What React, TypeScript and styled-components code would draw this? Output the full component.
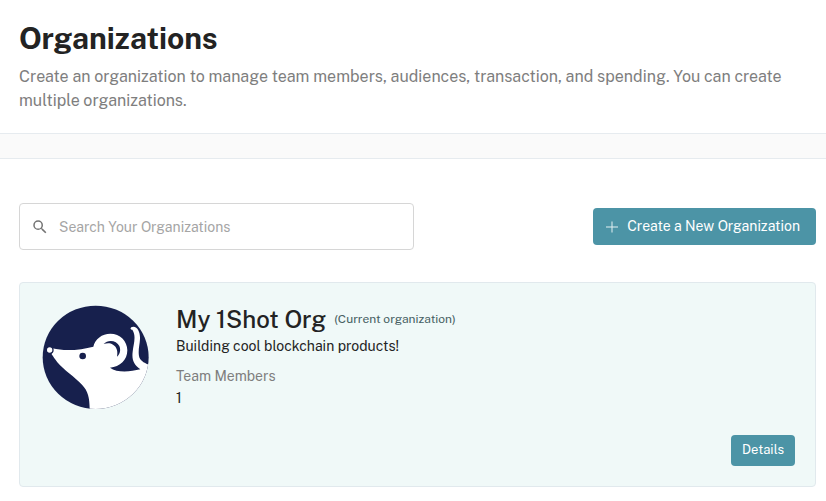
import React from "react";
import styled, { createGlobalStyle } from "styled-components";

const GlobalStyle = createGlobalStyle`
  *, *::before, *::after { box-sizing: border-box; }
  body {
    margin: 0;
    background: #fff;
    color: #212529;
    font-family: "Public Sans", Inter, "Liberation Sans", sans-serif;
    font-size: 14px;
  }
  h1, h2, p, dl, dd { margin: 0; }
`;

const Header = styled.header`
  padding: 18px 10px 20px 19px;
`;

const Title = styled.h1`
  font-size: 30px;
  line-height: 40px;
  font-weight: 700;
  color: #232323;
`;

const Lead = styled.p`
  margin-top: 7px;
  font-size: 16px;
  line-height: 24px;
  color: #7e7e7e;
`;

const Divider = styled.div`
  height: 26px;
  background: #fafafa;
  border: solid #e6ebef;
  border-width: 1px 0;
`;

const Main = styled.main`
  padding: 44px 10px 14px 19px;
`;

const Toolbar = styled.div`
  display: flex;
  align-items: center;
  justify-content: space-between;
  gap: 24px;
`;

const SearchBox = styled.label`
  display: flex;
  align-items: center;
  gap: 10px;
  flex: 0 1 395px;
  height: 47px;
  padding: 0 11px;
  border: 1px solid #d6d6d6;
  border-radius: 4px;
`;

const SearchInput = styled.input`
  flex: 1;
  min-width: 0;
  padding: 0;
  border: 0;
  outline: 0;
  background: transparent;
  font: inherit;
  line-height: 20px;
  color: #232323;
  &::placeholder { color: #a5a5a5; opacity: 1; }
`;

const Button = styled.button<{ $small?: boolean }>`
  display: flex;
  align-items: center;
  justify-content: center;
  gap: 8px;
  flex: none;
  height: ${(p) => (p.$small ? "31px" : "37px")};
  padding: ${(p) => (p.$small ? "0 11px 2px" : "0 16px 2px 12px")};
  border: 0;
  border-radius: 4px;
  background: #4c94a6;
  color: #fff;
  font-family: inherit;
  font-size: ${(p) => (p.$small ? "13px" : "14px")};
  line-height: 20px;
  cursor: pointer;
`;

const Card = styled.article`
  display: grid;
  grid-template-columns: 107px 1fr;
  column-gap: 27px;
  margin-top: 32px;
  padding: 20px 20px 20px 22px;
  border: 1px solid #e1e9ed;
  border-radius: 4px;
  background: #f0f9f8;
`;

const Avatar = styled.svg`
  display: block;
  width: 107px;
  height: 104px;
  margin-top: 2px;
`;

const NameRow = styled.div`
  display: flex;
  align-items: center;
  gap: 8px;
`;

const OrgName = styled.h2`
  font-size: 24px;
  line-height: 32px;
  font-weight: 500;
  color: #232323;
`;

const Current = styled.span`
  font-size: 12px;
  line-height: 16px;
  color: #466062;
`;

const Description = styled.p`
  line-height: 22px;
  color: #232323;
`;

const Stats = styled.dl`
  margin-top: 8px;
  line-height: 22px;
`;

const StatLabel = styled.dt`
  color: #7e7e7e;
`;

const StatValue = styled.dd`
  color: #232323;
`;

const Actions = styled.footer`
  grid-column: 1 / -1;
  display: flex;
  justify-content: flex-end;
  margin-top: 26px;
`;

const SearchIcon = () => (
  <svg width="18" height="18" viewBox="0 0 24 24" fill="#737373" aria-hidden="true">
    <path d="M15.5 14h-.79l-.28-.27A6.47 6.47 0 0 0 16 9.5 6.5 6.5 0 1 0 9.5 16c1.61 0 3.09-.59 4.23-1.57l.27.28v.79l5 4.99L20.49 19zm-6 0a4.5 4.5 0 1 1 0-9 4.5 4.5 0 0 1 0 9" />
  </svg>
);

const PlusIcon = () => (
  <svg width="14" height="14" viewBox="0 0 14 14" stroke="#e2f0f2" fill="none" aria-hidden="true">
    <path d="M7 2.5v11M1 8h12" />
  </svg>
);

const MouseAvatar = () => (
  <Avatar viewBox="37 28 321 312" preserveAspectRatio="none" role="img" aria-label="My 1Shot Org logo">
    <defs>
      <clipPath id="avatarDisc">
        <ellipse cx="198" cy="185" rx="159" ry="155" />
      </clipPath>
    </defs>
    <g clipPath="url(#avatarDisc)">
      <rect x="37" y="28" width="321" height="314" fill="#17204d" />
      <path
        fill="#fff"
        d="M68 158 C108 168 156 162 191 153 C196 130 217 114 242 114 C271 114 293 136 293 164 C293 193 271 214 241 216 C262 232 302 228 332 221 C312 207 306 192 309 168 C311 145 321 122 308 102 C300 102 301 93 311 93 C325 93 332 112 331 130 C330 149 325 164 328 181 C330 193 342 202 360 208 V345 H180 C180 307 176 287 157 267 C137 246 101 222 83 200 C76 191 72 184 66 176 Z"
      />
      <path fill="#17204d" d="M222 145 C235 130 261 134 269 151 C274 163 271 176 262 183 C265 167 262 154 250 147 C241 141 232 142 222 145 Z" />
      <circle cx="159" cy="181" r="10" fill="#17204d" />
      <circle cx="60" cy="163" r="10" fill="#fff" stroke="#17204d" strokeWidth="4" />
    </g>
  </Avatar>
);

export default function App() {
  return (
    <>
      <GlobalStyle />
      <Header>
        <Title>Organizations</Title>
        <Lead>
          Create an organization to manage team members, audiences, transaction, and spending. You can create multiple
          organizations.
        </Lead>
      </Header>
      <Divider />
      <Main>
        <Toolbar>
          <SearchBox>
            <SearchIcon />
            <SearchInput type="text" placeholder="Search Your Organizations" aria-label="Search Your Organizations" />
          </SearchBox>
          <Button type="button">
            <PlusIcon />
            Create a New Organization
          </Button>
        </Toolbar>
        <Card>
          <MouseAvatar />
          <div>
            <NameRow>
              <OrgName>My 1Shot Org</OrgName>
              <Current>(Current organization)</Current>
            </NameRow>
            <Description>Building cool blockchain products!</Description>
            <Stats>
              <StatLabel>Team Members</StatLabel>
              <StatValue>1</StatValue>
            </Stats>
          </div>
          <Actions>
            <Button type="button" $small>
              Details
            </Button>
          </Actions>
        </Card>
      </Main>
    </>
  );
}
